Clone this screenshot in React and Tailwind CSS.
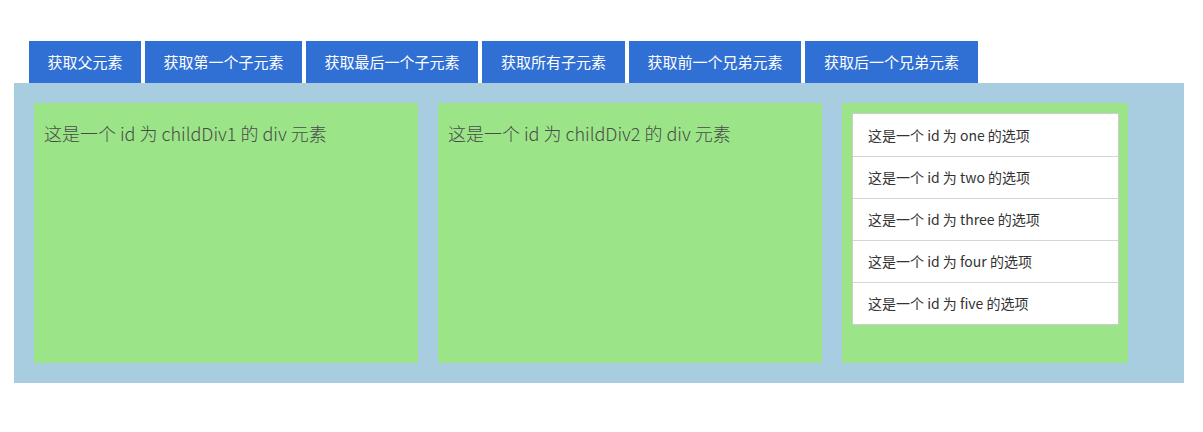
const buttons = [
  { label: '获取父元素', w: 'w-[112px]' },
  { label: '获取第一个子元素', w: 'w-[157px]' },
  { label: '获取最后一个子元素', w: 'w-[172px]' },
  { label: '获取所有子元素', w: 'w-[143px]' },
  { label: '获取前一个兄弟元素', w: 'w-[172px]' },
  { label: '获取后一个兄弟元素', w: 'w-[173px]' },
];

const items = ['one', 'two', 'three', 'four', 'five'];

export default function App() {
  return (
    <div className="min-h-[432px] bg-white pt-[41px] font-['Noto_Sans_CJK_SC','Noto_Sans',sans-serif]">
      {/* Buttons */}
      <div className="flex gap-[4px] pl-[29px]">
        {buttons.map(({ label, w }) => (
          <button
            key={label}
            className={`${w} h-[42px] bg-[#306fd4] text-white text-[15px] flex items-center justify-center`}
          >
            {label}
          </button>
        ))}
      </div>

      {/* Parent container */}
      <div className="ml-[14px] w-[1170px] h-[300px] bg-[#a8cde0] p-[20px] flex gap-[20px]">
        <div className="w-[384px] h-[260px] bg-[#9be588] px-[10px] pt-[15px] text-[18px] text-[#4a4a4a] font-light leading-[30px]">
          这是一个 id 为 childDiv1 的 div 元素
        </div>
        <div className="w-[384px] h-[260px] bg-[#9be588] px-[10px] pt-[15px] text-[18px] text-[#4a4a4a] font-light leading-[30px]">
          这是一个 id 为 childDiv2 的 div 元素
        </div>
        <div className="w-[286px] h-[260px] bg-[#9be588] p-[10px]">
          <ul className="w-[267px] bg-white border border-[#cccccc]">
            {items.map((id, i) => (
              <li
                key={id}
                className={`h-[42px] flex items-center pl-[15px] text-[14px] text-[#333333] ${
                  i > 0 ? 'border-t border-[#d6d6d6]' : ''
                }`}
              >
                这是一个 id 为 {id} 的选项
              </li>
            ))}
          </ul>
        </div>
      </div>
    </div>
  );
}
